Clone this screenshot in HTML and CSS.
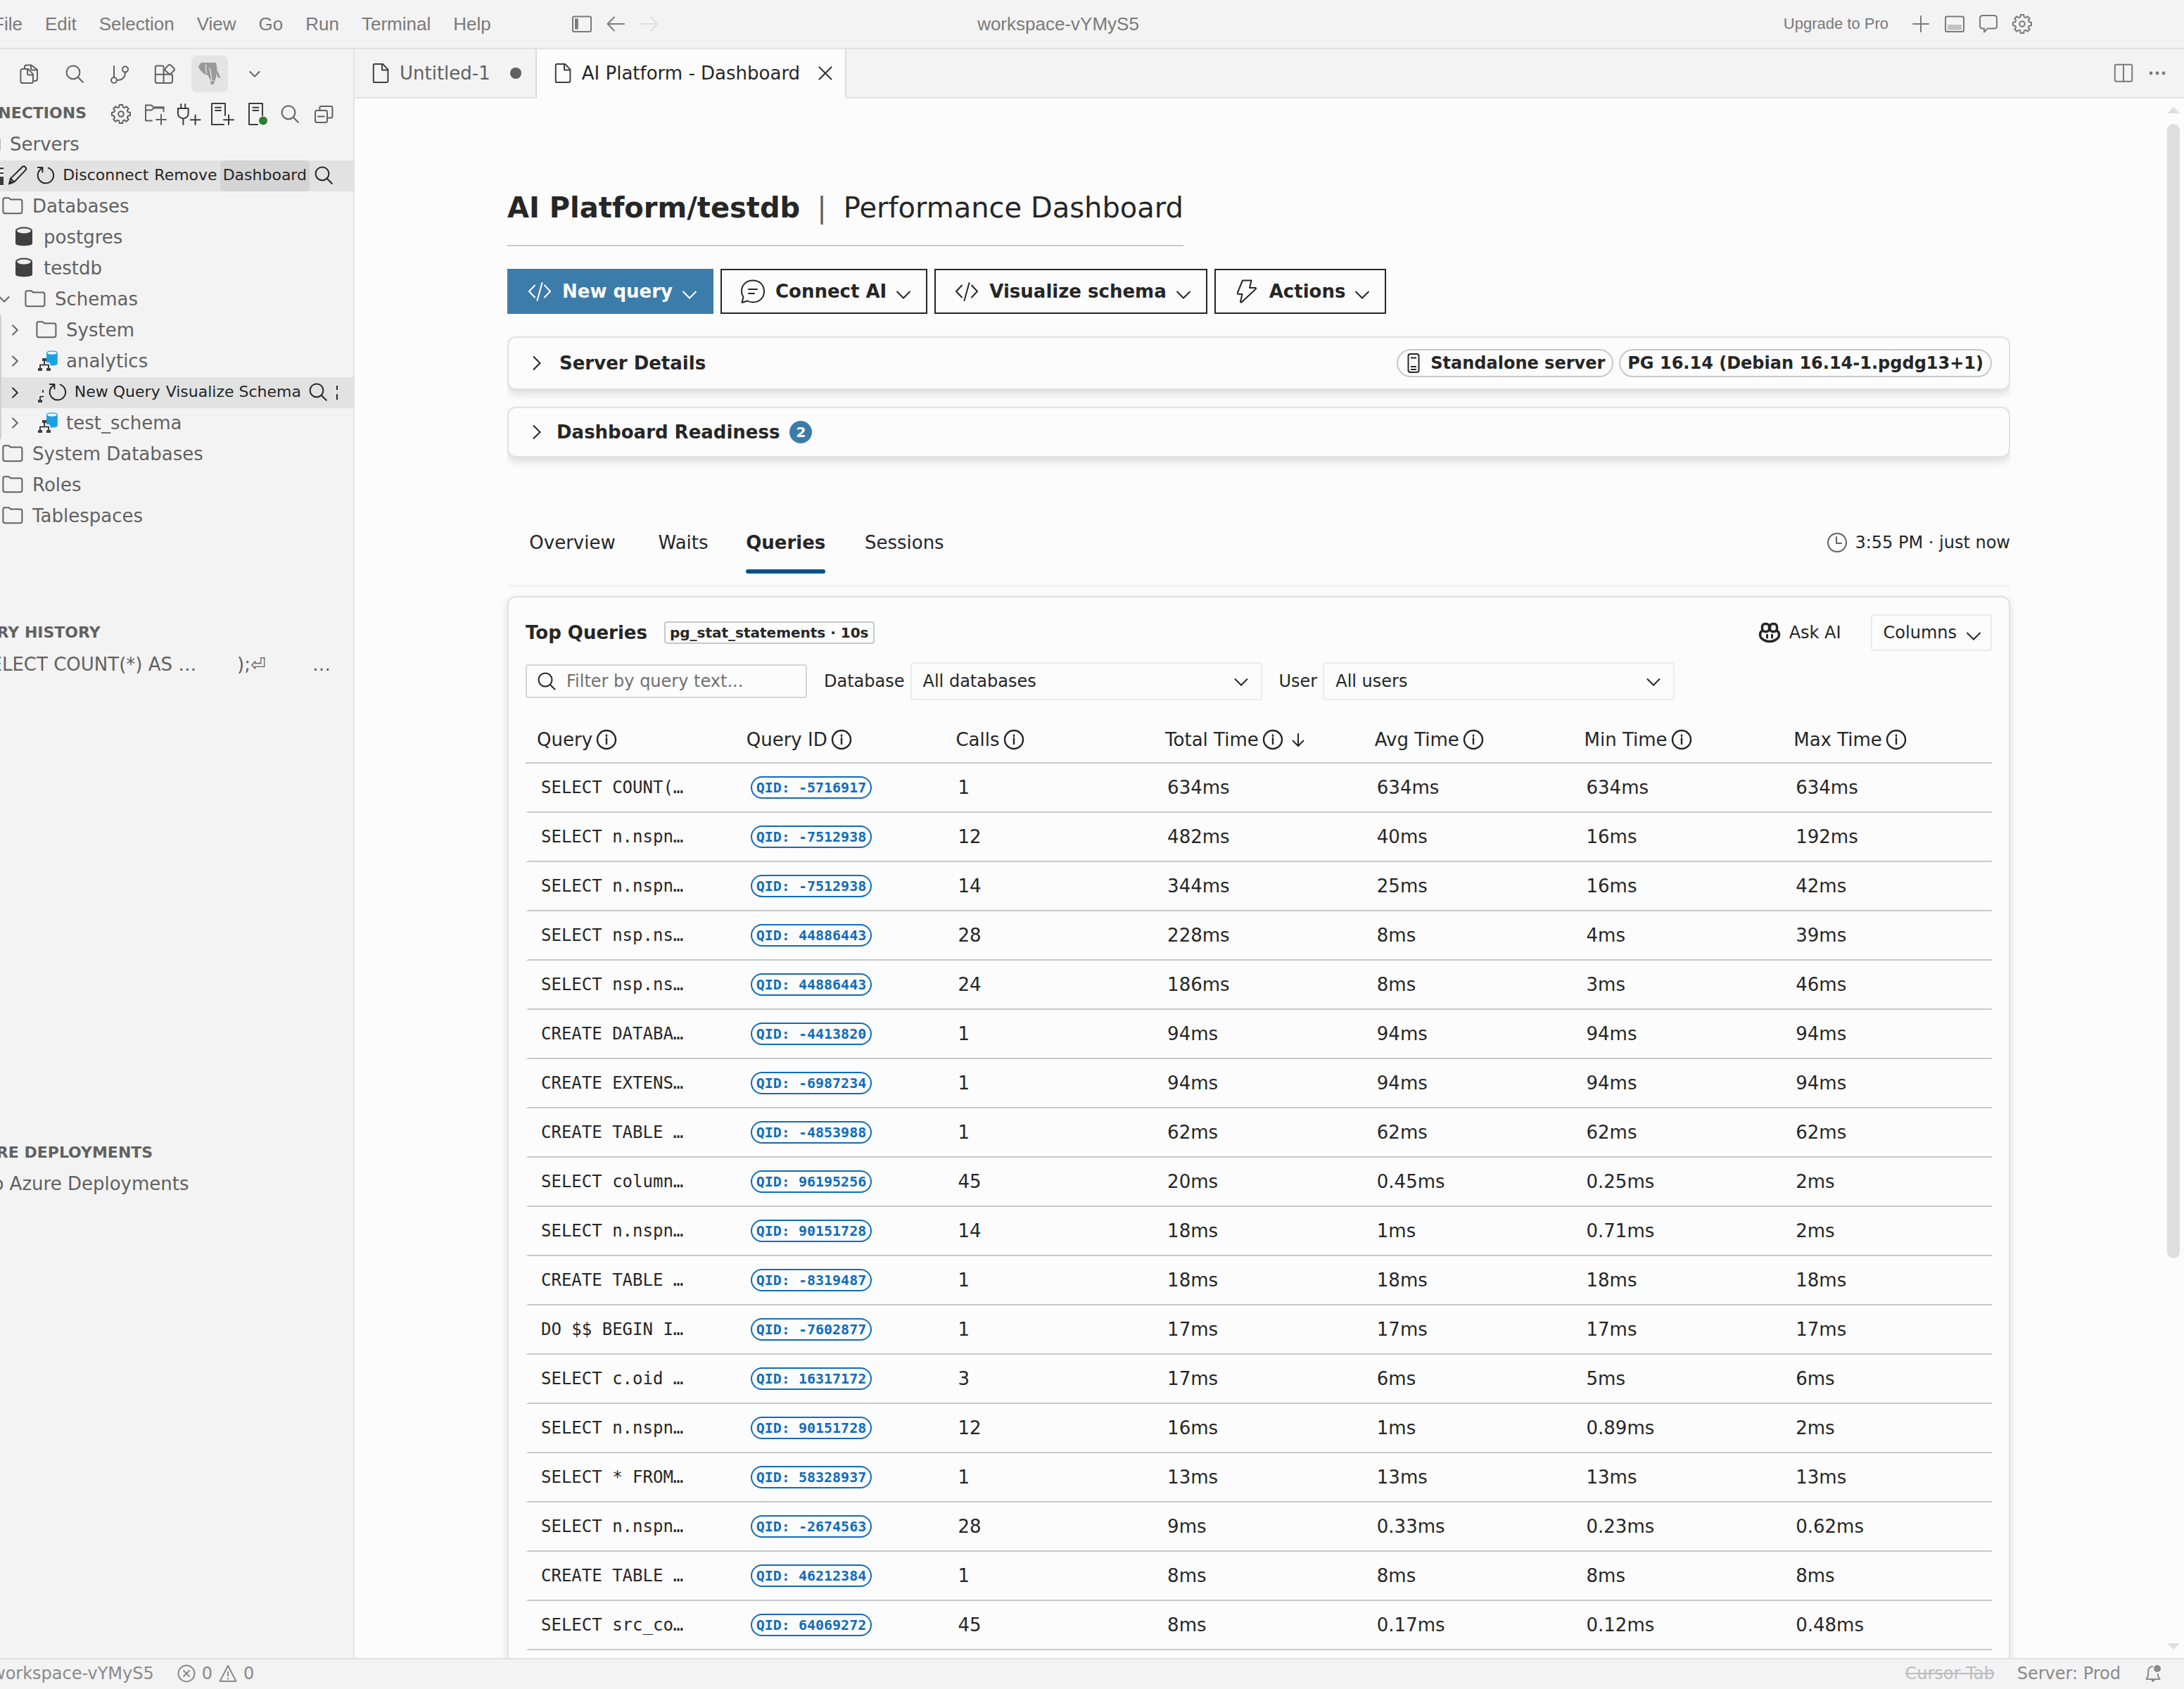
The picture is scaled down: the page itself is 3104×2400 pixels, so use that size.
FILE: index.html
```html
<!DOCTYPE html>
<html lang="en">
<head>
  <meta charset="UTF-8" />
  <meta name="viewport" content="width=device-width, initial-scale=1.0" />
  <title>AI Platform - Dashboard</title>
  <link rel="stylesheet" href="styles.css">
</head>
<body>
  <svg class="sprite" aria-hidden="true">
    <symbol id="i-folder" viewBox="0 0 16 16"><path d="M1.2 3.4c0-.8.5-1.3 1.300-1.300h2.700l1.500 1.200h6.700c.8 0 1.300.5 1.300 1.300v7.200c0 .8-.5 1.300-1.300 1.300H2.500c-.8 0-1.300-.5-1.300-1.300z"/></symbol>
    <symbol id="i-right" viewBox="0 0 16 16"><path d="M6 4.700 9.400 8 6 11.300"/></symbol>
    <symbol id="i-down" viewBox="0 0 16 16"><path d="M4.700 6.500 8 9.800l3.300-3.300"/></symbol>
    <symbol id="i-search" viewBox="0 0 16 16"><circle cx="7" cy="6.900" r="4.700"/><path d="m10.400 10.400 3.500 3.500"/></symbol>
    <symbol id="i-refresh" viewBox="0 0 16 16"><path d="M5 3.300A5.600 5.600 0 1 0 9.900 2.800M2.400 2.500h3.300v3.300"/></symbol>
    <symbol id="i-gear" viewBox="0 0 16 16"><path d="M6.850 1.500H9.150Q9.200 3 9.500 3.150T10.550 3.580L11.780 2.590 13.410 4.220 12.420 5.450Q12.600 6.400 12.930 6.680L14.500 6.850V9.150L12.930 9.320Q12.600 9.600 12.420 10.550L13.410 11.780 11.780 13.410 10.550 12.420Q9.600 12.600 9.320 12.930L9.150 14.500H6.850L6.680 12.930Q6.400 12.600 5.450 12.420L4.220 13.410 2.590 11.780 3.580 10.550Q3.400 9.600 3.070 9.320L1.500 9.150V6.850L3.070 6.680Q3.400 6.400 3.580 5.450L2.590 4.220 4.220 2.590 5.450 3.580Q6.400 3.400 6.680 3.070Z"/><circle cx="8" cy="8" r="1.900"/></symbol>
    <symbol id="i-file" viewBox="0 0 16 16"><path d="M4.200 1.500h5.800L13.700 5.300v8.200q0 1-1 1H4.200q-.8 0-.8-.8V2.300q0-.8.8-.8zM9.500 1.700v4.100h4"/></symbol>
    <symbol id="i-db" viewBox="0 0 16 16"><path class="fill" d="M2 3.500v9c0 2.200 12 2.200 12 0v-9z"/><ellipse class="lid" cx="8" cy="3.500" rx="5.500" ry="2.200"/></symbol>
    <symbol id="i-schema" viewBox="0 0 16 16"><path fill="#1ba1e2" stroke="none" d="M8 2.300v8.400l3 .6c2.500 0 4.900-.3 4.900-1.400V2.300z"/><ellipse cx="12" cy="2.300" rx="3.700" ry="1.400" fill="#eaf4fa" stroke="#1ba1e2" stroke-width=".6"/><path stroke="#f5f5f5" stroke-width="2.500" d="M6.500 7v3M3.500 13V10.200h6V13"/><path fill="none" stroke="#404040" stroke-width="1" d="M6.500 8v2.700M3.500 13v-2.300h6V13"/><path fill="#404040" stroke="none" d="M5 6h3v2H5zM2 13h3v2H2zM8 13h3v2H8z"/></symbol>
    <symbol id="i-info" viewBox="0 0 32 32"><g stroke-width="2.400"><circle cx="16" cy="16" r="13"/><path d="M16 14v8M16 9.500v1.500"/></g></symbol>
    <symbol id="i-code" viewBox="0 0 40 40"><path d="M13 11.500 5 20l8 8.500M27 11.500l8 8.500-8 8.500M23.500 8l-7 25"/></symbol>
    <symbol id="i-menu-chevron" viewBox="0 0 24 24"><path d="m2.500 12 9.500 9.500L21.500 12"/></symbol>
    <symbol id="i-select-chevron" viewBox="0 0 24 24"><path d="m3 8.500 9 9 9-9"/></symbol>
    <symbol id="i-card-chevron" viewBox="0 0 24 24"><path d="m7 2.500 9.500 9.500L7 21.500"/></symbol>
  </svg>

  <header class="titlebar">
    <div class="titlebar-left">
      <nav class="menu">
        <a href="#">File</a><a href="#">Edit</a><a href="#">Selection</a><a href="#">View</a><a href="#">Go</a><a href="#">Run</a><a href="#">Terminal</a><a href="#">Help</a>
      </nav>
      <button class="icon-btn" aria-label="Toggle side bar"><svg class="icon" viewBox="0 0 16 16"><rect x="1.500" y="2.700" width="13" height="10.800" rx="1"/><path class="fill" d="M3 4.200h2.400v7.600H3z"/></svg></button>
      <button class="icon-btn" aria-label="Back"><svg class="icon" viewBox="0 0 16 16"><path d="M14 8H2.500M7 3.200 2.300 8 7 12.800"/></svg></button>
      <button class="icon-btn faded" aria-label="Forward"><svg class="icon" viewBox="0 0 16 16"><path d="M2 8h11.500M9 3.200 13.700 8 9 12.800"/></svg></button>
    </div>
    <div class="titlebar-title">workspace-vYMyS5</div>
    <div class="titlebar-right">
      <a href="#" class="upgrade">Upgrade to Pro</a>
      <button class="icon-btn" aria-label="New"><svg class="icon" viewBox="0 0 16 16"><path d="M8 2.500v11M2.500 8h11"/></svg></button>
      <button class="icon-btn" aria-label="Toggle panel"><svg class="icon" viewBox="0 0 16 16"><rect x="1.500" y="2.700" width="13" height="10.800" rx="1"/><path fill="#c2c2c2" stroke="none" d="M3 8.500h10v3.800H3z"/></svg></button>
      <button class="icon-btn" aria-label="Chat"><svg class="icon" viewBox="0 0 16 16"><path d="M4 2h8q2 0 2 2v5.300q0 2-2 2H7.500L5 13.800v-2.500H4q-2 0-2-2V4q0-2 2-2z"/></svg></button>
      <button class="icon-btn" aria-label="Settings"><svg class="icon"><use href="#i-gear"/></svg></button>
    </div>
  </header>

  <div class="workbench">
    <aside class="sidebar">
      <div class="view-switcher">
        <button aria-label="Explorer"><svg class="icon" viewBox="0 0 16 16"><path d="M4.500 4V3q0-1.300 1.300-1.300H9L13.500 5v6.500q0 1.500-1.500 1.500h-1M9 1.800v2.400q0 1 1 1h3.300M3 4.500h4l3.500 3.700v5q0 1.300-1.300 1.300H3q-1.300 0-1.300-1.300V5.800Q1.700 4.500 3 4.500zM6.500 4.700v3q0 1 1 1h3"/></svg></button>
        <button aria-label="Search"><svg class="icon"><use href="#i-search"/></svg></button>
        <button aria-label="Source control"><svg class="icon" viewBox="0 0 16 16"><circle cx="4" cy="12.500" r="2"/><circle cx="12" cy="4.800" r="2"/><path d="M4 2.500v8M12 6.800c0 3.500-2 5.700-6 5.700"/></svg></button>
        <button aria-label="Extensions"><svg class="icon" viewBox="0 0 16 16"><path d="M7.300 8.400V3.200q0-1-1-1H2.600q-1.200 0-1.200 1.200v9.800q0 1.300 1.300 1.300h9.600q1.200 0 1.200-1.200V9.500q0-1.100-1.100-1.100H1.400M7.300 8.400v6.100M8.500 4.200l2.200-2.400q.8-.6 1.600 0l2.400 2.300q.6.700 0 1.400l-2.300 2.400q-.7.500-1.400 0L8.500 5.600q-.5-.7 0-1.400z"/></svg></button>
        <button class="active" aria-label="PostgreSQL"><svg class="icon" viewBox="0 0 32 32"><path fill="#999" stroke="none" d="M0 5 4 0h21l1.500 8 5 14-4-1-2-6-.5 6-3.500 10h-4V26l-4-8-5-2Q2 12 0 5z"/><path stroke="#eee" stroke-width="1.200" fill="none" d="M11 3q-1.500 5 1 12M15 8q3 1 2.500 8l1.500 7M17 24l4 2M26 10l5 7"/></svg></button>
        <button aria-label="More views"><svg class="icon"><use href="#i-down"/></svg></button>
      </div>

      <section class="pane">
        <div class="pane-header">
          <h2>CONNECTIONS</h2>
          <button class="icon-btn" aria-label="Settings"><svg class="icon"><use href="#i-gear"/></svg></button>
          <button class="icon-btn" aria-label="New folder"><svg class="icon" viewBox="0 0 16 16"><path d="M6 12.800H1.500V1.700h4l1.700 1.400h7.100v3M1.500 5.200h4.200l1.500-1.400h7.100M12.500 8.500v7M9 12h7"/></svg></button>
          <button class="icon-btn dark" aria-label="New connection"><svg class="icon" viewBox="0 0 16 16"><path d="M2.600 1v3M5.600 1v3M.5 4h7.300v4q-.2 2.700-3.600 3.200Q.8 10.700.5 8zM4.200 11.200V15.500M12.800 8.800v6.700M9.300 12.100h7"/></svg></button>
          <button class="icon-btn dark" aria-label="Add server"><svg class="icon" viewBox="0 0 16 16"><path d="M10 9V.500H.5v15H9M3 3.400h4M3 5.500h4M12.500 8.800v6.700M9 12.100h7"/></svg></button>
          <button class="icon-btn dark" aria-label="Add container"><svg class="icon" viewBox="0 0 16 16"><path d="M12.500 9V.500H3v15h6M5.700 3.400h4M5.700 5.500h4"/><circle cx="13" cy="12.700" r="3" fill="#2e7d32" stroke="none"/></svg></button>
          <button class="icon-btn" aria-label="Search"><svg class="icon"><use href="#i-search"/></svg></button>
          <button class="icon-btn" aria-label="Collapse all"><svg class="icon" viewBox="0 0 16 16"><rect x="2" y="5.500" width="8.500" height="8.500" rx="1.200"/><path d="M5.200 5.300V3.500q0-1 1-1h7q1 0 1 1V9.500q0 1.200-1 1.200h-2.500M4 9.800h4.500"/></svg></button>
        </div>
        <div class="tree">
          <div class="row lv0"><svg class="icon"><use href="#i-down"/></svg><svg class="icon"><use href="#i-folder"/></svg><span>Servers</span></div>
          <div class="row lv1 hovered">
            <svg class="icon"><use href="#i-down"/></svg>
            <span class="row-icon"><svg class="icon server-icon" viewBox="0 0 16 16"><path d="M1 1.500h14v2.200H1zM1 5h14v2H1zM1 8h14v7H1z"/></svg></span>
            <button class="action" aria-label="Edit"><svg class="icon" viewBox="0 0 16 16"><path d="M2 14.200 3 10.300 11.600 1.900q.9-.6 1.900.3t.3 2L5.600 12.800zM3.200 10.500l2.300 2.200M2 14.200l1.700-1.700"/></svg></button>
            <button class="action" aria-label="Refresh"><svg class="icon"><use href="#i-refresh"/></svg></button>
            <button class="action-label">Disconnect</button><button class="action-label">Remove</button><button class="action-label pressed">Dashboard</button>
            <button class="action" aria-label="Search"><svg class="icon"><use href="#i-search"/></svg></button>
          </div>
          <div class="row lv2"><svg class="icon"><use href="#i-down"/></svg><svg class="icon"><use href="#i-folder"/></svg><span>Databases</span></div>
          <div class="row lv3"><svg class="icon"></svg><svg class="icon db"><use href="#i-db"/></svg><span>postgres</span></div>
          <div class="row lv3"><svg class="icon"></svg><svg class="icon db"><use href="#i-db"/></svg><span>testdb</span></div>
          <div class="row lv4"><svg class="icon"><use href="#i-down"/></svg><svg class="icon"><use href="#i-folder"/></svg><span>Schemas</span></div>
          <div class="tree-group">
            <div class="row"><svg class="icon"><use href="#i-right"/></svg><svg class="icon"><use href="#i-folder"/></svg><span>System</span></div>
            <div class="row"><svg class="icon"><use href="#i-right"/></svg><svg class="icon"><use href="#i-schema"/></svg><span>analytics</span></div>
            <div class="row hovered">
              <svg class="icon"><use href="#i-right"/></svg>
              <span class="row-icon"><svg class="icon"><use href="#i-schema"/></svg></span>
              <button class="action" aria-label="Refresh"><svg class="icon"><use href="#i-refresh"/></svg></button>
              <button class="action-label">New Query</button><button class="action-label">Visualize Schema</button>
              <button class="action" aria-label="Search"><svg class="icon"><use href="#i-search"/></svg></button>
              <svg class="more-cut" viewBox="0 0 8 20"><path d="M7 0v6M7 12v8"/></svg>
            </div>
            <div class="row"><svg class="icon"><use href="#i-right"/></svg><svg class="icon"><use href="#i-schema"/></svg><span>test_schema</span></div>
          </div>
          <div class="row lv2"><svg class="icon"><use href="#i-right"/></svg><svg class="icon"><use href="#i-folder"/></svg><span>System Databases</span></div>
          <div class="row lv2"><svg class="icon"><use href="#i-right"/></svg><svg class="icon"><use href="#i-folder"/></svg><span>Roles</span></div>
          <div class="row lv2"><svg class="icon"><use href="#i-right"/></svg><svg class="icon"><use href="#i-folder"/></svg><span>Tablespaces</span></div>
        </div>
      </section>

      <section class="pane">
        <div class="pane-header"><h2>QUERY HISTORY</h2></div>
        <div class="row text-row">SELECT COUNT(*) AS …       );⏎        …</div>
      </section>

      <section class="pane">
        <div class="pane-header"><h2>AZURE DEPLOYMENTS</h2></div>
        <div class="row text-row">No Azure Deployments</div>
      </section>
    </aside>

    <div class="editor">
      <div class="tabs">
        <div class="tab"><svg class="icon"><use href="#i-file"/></svg><span>Untitled-1</span><svg class="icon tab-end" viewBox="0 0 16 16"><circle class="fill" cx="8" cy="8" r="4"/></svg></div>
        <div class="tab active"><svg class="icon"><use href="#i-file"/></svg><span>AI Platform - Dashboard</span><button class="icon-btn tab-end" aria-label="Close"><svg class="icon" viewBox="0 0 16 16"><path d="m3.700 3.700 8.600 8.600M12.300 3.700l-8.600 8.600"/></svg></button></div>
        <div class="tab-actions">
          <button class="icon-btn" aria-label="Split editor"><svg class="icon" viewBox="0 0 16 16"><rect x="1.900" y="1.900" width="12.200" height="12" rx="1"/><path d="M8 2v12"/></svg></button>
          <button class="icon-btn" aria-label="More actions"><svg class="icon" viewBox="0 0 16 16"><g class="fill"><circle cx="3.500" cy="8" r="1.200"/><circle cx="8" cy="8" r="1.200"/><circle cx="12.500" cy="8" r="1.200"/></g></svg></button>
        </div>
      </div>

      <div class="viewport">
        <main class="dashboard">
          <h1 class="page-title"><strong>AI Platform/testdb</strong><span class="pipe">|</span><span>Performance Dashboard</span></h1>

          <div class="toolbar">
            <button class="btn primary"><svg class="icon-lg"><use href="#i-code"/></svg>New query<svg class="chev"><use href="#i-menu-chevron"/></svg></button>
            <button class="btn"><svg class="icon-lg" viewBox="0 0 40 40"><path d="M20 4.500c9.500 0 16 6.500 16 15.500s-6.500 15.500-16 15.500c-3 0-5.500-.8-7.500-2L4.500 36l2-8C4.800 25.500 4 23 4 20 4 11 10.500 4.500 20 4.500zM14 17h12M14 23h8"/></svg>Connect AI<svg class="chev"><use href="#i-menu-chevron"/></svg></button>
            <button class="btn"><svg class="icon-lg"><use href="#i-code"/></svg>Visualize schema<svg class="chev"><use href="#i-menu-chevron"/></svg></button>
            <button class="btn"><svg class="icon-lg" viewBox="0 0 40 40"><path d="M14 4.500h12.500L24 15h8.500q1 1 0 2L12.500 35.500q-1.500.5-1.500-1L13.500 24H8q-1.500-.5-1-2.500z"/></svg>Actions<svg class="chev"><use href="#i-menu-chevron"/></svg></button>
          </div>

          <div class="summary-cards">
            <details class="card">
              <summary class="roomy">
                <svg class="chev"><use href="#i-card-chevron"/></svg>
                <span class="card-name">Server Details</span>
                <span class="badges">
                  <span class="badge"><svg class="badge-icon" viewBox="0 0 24 32"><rect x="4.500" y="3" width="15" height="26" rx="3"/><path d="M8 8.500h8M8 21h8M8 25h8"/></svg>Standalone server</span>
                  <span class="badge">PG 16.14 (Debian 16.14-1.pgdg13+1)</span>
                </span>
              </summary>
            </details>
            <details class="card">
              <summary>
                <svg class="chev"><use href="#i-card-chevron"/></svg>
                <span class="card-name">Dashboard Readiness</span>
                <span class="count">2</span>
              </summary>
            </details>
          </div>

          <div class="tabbar">
            <div class="tablist" role="tablist">
              <button role="tab" data-label="Overview">Overview</button>
              <button role="tab" data-label="Waits">Waits</button>
              <button role="tab" data-label="Queries" aria-selected="true">Queries</button>
              <button role="tab" data-label="Sessions">Sessions</button>
            </div>
            <div class="updated"><svg class="icon" viewBox="0 0 32 32"><circle cx="16" cy="16" r="13"/><path d="M15 8v9h7"/></svg>3:55 PM · just now</div>
          </div>

          <section class="panel">
            <div class="panel-head">
              <h3>Top Queries</h3>
              <span class="source">pg_stat_statements · 10s</span>
              <button class="ask-ai"><svg class="icon" viewBox="0 0 32 32"><g stroke-width="3.500"><rect x="5.500" y="3.500" width="10" height="11" rx="4"/><rect x="16.500" y="3.500" width="10" height="11" rx="4"/><path d="M5 13.500q-2.500 2-2.500 5t1.500 5q5 5 12 5t12-5q1.500-2 1.500-5t-2.500-5"/></g><path stroke-width="3" d="M12.500 19v4M19.500 19v4"/></svg>Ask AI</button>
              <button class="columns-btn">Columns<svg class="chev"><use href="#i-menu-chevron"/></svg></button>
            </div>

            <div class="filters">
              <div class="search-box">
                <svg viewBox="0 0 28 28"><circle cx="12" cy="12" r="9.500"/><path d="m19 19 7 7"/></svg>
                <input type="text" id="query-filter" aria-label="Filter by query text" placeholder="Filter by query text...">
              </div>
              <div class="field">
                <label for="database">Database</label>
                <div class="select"><select id="database"><option>All databases</option></select><svg class="chev"><use href="#i-select-chevron"/></svg></div>
              </div>
              <div class="field">
                <label for="user">User</label>
                <div class="select"><select id="user"><option>All users</option></select><svg class="chev"><use href="#i-select-chevron"/></svg></div>
              </div>
            </div>

            <table class="queries">
              <thead>
                <tr>
                  <th><span>Query<svg class="icon"><use href="#i-info"/></svg></span></th>
                  <th><span>Query ID<svg class="icon"><use href="#i-info"/></svg></span></th>
                  <th><span>Calls<svg class="icon"><use href="#i-info"/></svg></span></th>
                  <th><span>Total Time<svg class="icon"><use href="#i-info"/></svg><svg class="sort" viewBox="0 0 24 32"><path d="M12 7v18M4 17l8 8 8-8"/></svg></span></th>
                  <th><span>Avg Time<svg class="icon"><use href="#i-info"/></svg></span></th>
                  <th><span>Min Time<svg class="icon"><use href="#i-info"/></svg></span></th>
                  <th><span>Max Time<svg class="icon"><use href="#i-info"/></svg></span></th>
                </tr>
              </thead>
              <tbody>
                <tr><td>SELECT COUNT(…</td><td><span class="qid">QID: -5716917</span></td><td>1</td><td>634ms</td><td>634ms</td><td>634ms</td><td>634ms</td></tr>
                <tr><td>SELECT n.nspn…</td><td><span class="qid">QID: -7512938</span></td><td>12</td><td>482ms</td><td>40ms</td><td>16ms</td><td>192ms</td></tr>
                <tr><td>SELECT n.nspn…</td><td><span class="qid">QID: -7512938</span></td><td>14</td><td>344ms</td><td>25ms</td><td>16ms</td><td>42ms</td></tr>
                <tr><td>SELECT nsp.ns…</td><td><span class="qid">QID: 44886443</span></td><td>28</td><td>228ms</td><td>8ms</td><td>4ms</td><td>39ms</td></tr>
                <tr><td>SELECT nsp.ns…</td><td><span class="qid">QID: 44886443</span></td><td>24</td><td>186ms</td><td>8ms</td><td>3ms</td><td>46ms</td></tr>
                <tr><td>CREATE DATABA…</td><td><span class="qid">QID: -4413820</span></td><td>1</td><td>94ms</td><td>94ms</td><td>94ms</td><td>94ms</td></tr>
                <tr><td>CREATE EXTENS…</td><td><span class="qid">QID: -6987234</span></td><td>1</td><td>94ms</td><td>94ms</td><td>94ms</td><td>94ms</td></tr>
                <tr><td>CREATE TABLE …</td><td><span class="qid">QID: -4853988</span></td><td>1</td><td>62ms</td><td>62ms</td><td>62ms</td><td>62ms</td></tr>
                <tr><td>SELECT column…</td><td><span class="qid">QID: 96195256</span></td><td>45</td><td>20ms</td><td>0.45ms</td><td>0.25ms</td><td>2ms</td></tr>
                <tr><td>SELECT n.nspn…</td><td><span class="qid">QID: 90151728</span></td><td>14</td><td>18ms</td><td>1ms</td><td>0.71ms</td><td>2ms</td></tr>
                <tr><td>CREATE TABLE …</td><td><span class="qid">QID: -8319487</span></td><td>1</td><td>18ms</td><td>18ms</td><td>18ms</td><td>18ms</td></tr>
                <tr><td>DO $$ BEGIN I…</td><td><span class="qid">QID: -7602877</span></td><td>1</td><td>17ms</td><td>17ms</td><td>17ms</td><td>17ms</td></tr>
                <tr><td>SELECT c.oid …</td><td><span class="qid">QID: 16317172</span></td><td>3</td><td>17ms</td><td>6ms</td><td>5ms</td><td>6ms</td></tr>
                <tr><td>SELECT n.nspn…</td><td><span class="qid">QID: 90151728</span></td><td>12</td><td>16ms</td><td>1ms</td><td>0.89ms</td><td>2ms</td></tr>
                <tr><td>SELECT * FROM…</td><td><span class="qid">QID: 58328937</span></td><td>1</td><td>13ms</td><td>13ms</td><td>13ms</td><td>13ms</td></tr>
                <tr><td>SELECT n.nspn…</td><td><span class="qid">QID: -2674563</span></td><td>28</td><td>9ms</td><td>0.33ms</td><td>0.23ms</td><td>0.62ms</td></tr>
                <tr><td>CREATE TABLE …</td><td><span class="qid">QID: 46212384</span></td><td>1</td><td>8ms</td><td>8ms</td><td>8ms</td><td>8ms</td></tr>
                <tr><td>SELECT src_co…</td><td><span class="qid">QID: 64069272</span></td><td>45</td><td>8ms</td><td>0.17ms</td><td>0.12ms</td><td>0.48ms</td></tr>
              </tbody>
            </table>
          </section>
        </main>

        <div class="scrollbar" aria-hidden="true">
          <svg viewBox="0 0 18 9"><path d="M9 0l9 9H0z"/></svg>
          <div class="track"><div class="thumb"></div></div>
          <svg viewBox="0 0 18 9"><path d="M9 9l9-9H0z"/></svg>
        </div>
      </div>
    </div>
  </div>

  <footer class="statusbar">
    <a href="#" class="workspace">workspace-vYMyS5</a>
    <a href="#" class="problems">
      <svg viewBox="0 0 28 28"><circle cx="14" cy="14" r="11.500"/><path d="m9.500 9.500 9 9M18.500 9.500l-9 9"/></svg>0
      <svg viewBox="0 0 28 28"><path d="M14 3 2.500 25h23zM14 11v7M14 20v2.500"/></svg>0
    </a>
    <a href="#" class="cursor-tab">Cursor Tab</a>
    <a href="#">Server: Prod</a>
    <button class="icon-btn" aria-label="Notifications"><svg viewBox="0 0 28 28"><path d="M14 4q-7 0-7 8v5.500L4.500 22h19L21 17.500V14"/><path class="fill" d="M11 23h6l-3 3.500z"/><circle class="fill" cx="20" cy="7" r="5"/></svg></button>
  </footer>
</body>
</html>
```

FILE: styles.css
```css
* {
  box-sizing: border-box;
}
body {
  margin: 0;
  height: 100vh;
  display: flex;
  flex-direction: column;
  overflow: hidden;
  font-family: "DejaVu Sans", sans-serif;
  font-size: 26px;
  color: #262626;
  background: #f3f3f3;
}
h1, h2, h3 {
  margin: 0;
}
a {
  color: inherit;
  text-decoration: none;
}
button {
  font: inherit;
  color: inherit;
  background: none;
  border: none;
  padding: 0;
}
svg {
  fill: none;
  stroke: currentColor;
  flex: none;
}
.sprite {
  position: absolute;
  width: 0;
  height: 0;
}
.icon {
  display: block;
  width: 32px;
  height: 32px;
  stroke-width: 1;
  stroke-linecap: round;
  stroke-linejoin: round;
  overflow: visible;
}
.icon-btn {
  display: flex;
}
.fill {
  fill: currentColor;
  stroke: none;
}

/* title bar */
.titlebar {
  display: grid;
  grid-template-columns: 1fr auto 1fr;
  align-items: center;
  height: 70px;
  padding-right: 96px;
  border-bottom: 2px solid #e2e2e2;
  font-family: "Liberation Sans", sans-serif;
  color: #7a7a7a;
}
.titlebar-left, .titlebar-right {
  display: flex;
  align-items: center;
  gap: 16px;
}
.titlebar-right {
  justify-content: flex-end;
  padding-right: 118px;
}
.menu {
  display: flex;
  margin-left: -26px;
  margin-right: 81px;
}
.menu a {
  padding: 0 16px;
}
.faded {
  color: #e0e0e0;
}
.upgrade {
  font-size: 22px;
  padding-right: 14px;
}

.workbench {
  flex: 1;
  min-height: 0;
  display: flex;
}

/* sidebar, partly scrolled out on the left */
.sidebar {
  flex: none;
  width: 600px;
  margin-left: -96px;
  border-right: 2px solid #e2e2e2;
  display: flex;
  flex-direction: column;
  color: #616161;
}
.view-switcher {
  display: flex;
  align-items: center;
  gap: 12px;
  height: 70px;
  padding-left: 112px;
}
.view-switcher button {
  width: 52px;
  height: 52px;
  display: grid;
  place-items: center;
  border-radius: 8px;
}
.view-switcher .active {
  background: #e4e4e4;
}
.pane {
  flex: 1;
}
.pane-header {
  display: flex;
  align-items: center;
  gap: 16px;
  height: 44px;
  padding: 0 26px 0 40px;
}
.pane-header h2 {
  margin-right: auto;
  padding-bottom: 4px;
  font-size: 22px;
}
.dark {
  color: #3c3c3c;
}
.row {
  display: flex;
  align-items: center;
  gap: 12px;
  height: 44px;
  padding-right: 22px;
  padding-bottom: 2px;
  white-space: nowrap;
}
.lv0 { padding-left: 22px; }
.lv1 { padding-left: 38px; }
.lv2 { padding-left: 54px; }
.lv3 { padding-left: 70px; }
.lv4 { padding-left: 86px; }
.tree-group {
  margin-left: 96px;
  border-left: 2px solid #d0d0d0;
}
.tree-group .row {
  padding-left: 4px;
}
.text-row {
  padding-left: 66px;
  white-space: pre;
}
.db {
  color: #404040;
}
.lid {
  fill: #ededed;
  stroke: #404040;
  stroke-width: 1;
}
.row.hovered {
  gap: 0;
  padding-bottom: 0;
  background: #e2e2e2;
  color: #262626;
}
.row-icon {
  flex: 1;
  min-width: 0;
  margin-left: 12px;
  overflow: hidden;
}
.server-icon {
  fill: #3c3c3c;
  stroke: #f5f5f5;
}
.action {
  flex: none;
  width: 40px;
  padding: 0 4px 2px;
}
.action-label {
  height: 44px;
  padding: 0 4px 4px;
  font-size: 22px;
  border-radius: 6px;
}
.pressed {
  background: #d4d4d4;
}
.more-cut {
  width: 8px;
  height: 20px;
  stroke-width: 2;
}

/* editor tabs */
.editor {
  flex: 1;
  min-width: 0;
  display: flex;
  flex-direction: column;
  background: #fcfcfc;
}
.tabs {
  display: flex;
  height: 70px;
  background: #f3f3f3;
}
.tab {
  display: flex;
  align-items: center;
  gap: 12px;
  padding: 0 12px 0 20px;
  border-right: 2px solid #dcdcdc;
  border-bottom: 2px solid #e2e2e2;
  color: #616161;
}
.tab > .icon:first-child {
  color: #404040;
}
.tab.active {
  background: #fcfcfc;
  border-bottom-color: #fcfcfc;
  color: #262626;
}
.tab-end {
  margin-left: 8px;
}
.tab-actions {
  flex: 1;
  display: flex;
  align-items: center;
  justify-content: flex-end;
  gap: 16px;
  padding-right: 22px;
  border-bottom: 2px solid #e2e2e2;
  color: #7a7a7a;
}

/* dashboard */
.viewport {
  flex: 1;
  min-height: 0;
  display: flex;
  overflow: hidden;
}
.dashboard {
  flex: 1;
  max-width: 2136px;
  margin: 0 auto;
  padding-top: 130px;
}
.page-title {
  display: flex;
  gap: 24px;
  width: fit-content;
  padding-bottom: 28px;
  border-bottom: 2px solid #c8c8c8;
  font-size: 40px;
  font-weight: 400;
  line-height: 50px;
}
.pipe {
  color: #616161;
}
.toolbar {
  display: flex;
  gap: 10px;
  margin: 32px 0;
}
.btn {
  display: flex;
  align-items: center;
  gap: 12px;
  height: 64px;
  padding: 0 20px 0 24px;
  border: 2px solid #262626;
  font-weight: 700;
}
.primary {
  color: #fff;
  background: #3c7cab;
  border-color: #3c7cab;
}
.icon-lg {
  width: 40px;
  height: 40px;
  stroke-width: 2;
  stroke-linecap: round;
  stroke-linejoin: round;
}
.chev {
  width: 24px;
  height: 24px;
  stroke-width: 2;
}
.summary-cards {
  display: flex;
  flex-direction: column;
  gap: 24px;
  overflow-x: clip;
}
.card {
  border: 2px solid #e2e2e2;
  border-radius: 12px;
  background: #fcfcfc;
  box-shadow: 0 6px 12px rgba(0, 0, 0, 0.13);
}
.card summary {
  display: flex;
  align-items: center;
  gap: 16px;
  height: 68px;
  padding: 0 24px 0 28px;
  list-style: none;
  font-weight: 700;
}
.card .roomy {
  height: 72px;
  gap: 20px;
}
.card .count {
  margin-left: -2px;
}
.badges {
  display: flex;
  gap: 8px;
  margin-left: auto;
}
.badge {
  display: flex;
  align-items: center;
  gap: 12px;
  height: 40px;
  padding: 0 10px;
  border: 2px solid #c8c8c8;
  border-radius: 20px;
  font-size: 24px;
}
.badge-icon {
  width: 24px;
  height: 32px;
  stroke-width: 2;
}
.count {
  display: grid;
  place-items: center;
  width: 32px;
  height: 32px;
  border-radius: 50%;
  background: #3c7cab;
  color: #fff;
  font-size: 20px;
}
.tabbar {
  display: flex;
  align-items: center;
  justify-content: space-between;
  margin: 64px 0 16px;
  padding: 13px 0 16px;
  box-shadow: 0 2px 6px rgba(0, 0, 0, 0.07);
  clip-path: inset(0 0 -16px 0);
}
.tablist {
  display: flex;
}
/* the hidden bold copy keeps a tab's width when it gets selected */
.tablist button {
  position: relative;
  display: grid;
  align-content: center;
  justify-items: center;
  height: 88px;
  margin: 0 24px;
}
.tablist button::after {
  content: attr(data-label);
  height: 0;
  visibility: hidden;
  font-weight: 700;
}
.tablist button[aria-selected="true"] {
  font-weight: 700;
}
.tablist button[aria-selected="true"]::before {
  content: "";
  position: absolute;
  left: 0;
  right: 0;
  bottom: 0;
  height: 6px;
  border-radius: 3px;
  background: #005388;
}
.updated {
  display: flex;
  align-items: center;
  gap: 9px;
  font-size: 24px;
}
.updated .icon {
  color: #616161;
  stroke-width: 2;
}

/* top queries */
.panel {
  padding: 24px;
  border: 2px solid #e2e2e2;
  border-radius: 12px;
  background: #fcfcfc;
  box-shadow: 0 4px 12px rgba(0, 0, 0, 0.13);
}
.panel-head {
  display: flex;
  align-items: center;
}
.panel-head h3 {
  font-size: 26px;
}
.source {
  height: 32px;
  margin-left: 24px;
  padding: 0 6px;
  border: 2px solid #c8c8c8;
  border-radius: 4px;
  font-size: 20px;
  font-weight: 700;
  line-height: 28px;
}
.ask-ai {
  display: flex;
  align-items: center;
  gap: 12px;
  margin-left: auto;
  margin-right: 42px;
  font-size: 24px;
}
.columns-btn {
  display: flex;
  align-items: center;
  gap: 12px;
  height: 52px;
  padding: 0 12px 0 16px;
  border: 2px solid #ebebeb;
  border-radius: 4px;
  font-size: 24px;
}
.filters {
  display: flex;
  align-items: center;
  gap: 24px;
  margin-top: 16px;
  font-size: 24px;
}
.search-box {
  display: flex;
  align-items: center;
  gap: 14px;
  width: 400px;
  height: 48px;
  padding: 0 14px;
  border: 2px solid #d6d6d6;
  border-radius: 4px;
}
.search-box svg {
  width: 28px;
  height: 28px;
  stroke-width: 2;
}
.search-box input {
  flex: 1;
  min-width: 0;
  padding: 0;
  border: none;
  outline: none;
  background: none;
  font: inherit;
}
.search-box input::placeholder {
  color: #707070;
}
.field {
  display: flex;
  align-items: center;
  gap: 8px;
}
.select {
  display: grid;
  align-items: center;
  width: 500px;
}
.select select, .select svg {
  grid-area: 1 / 1;
}
.select select {
  appearance: none;
  height: 54px;
  padding: 0 16px;
  border: 2px solid #ebebeb;
  border-radius: 4px;
  background: none;
  color: inherit;
  font: inherit;
}
.select svg {
  justify-self: end;
  margin-right: 18px;
}
.queries {
  width: 100%;
  margin-top: 20px;
  border-collapse: separate;
  border-spacing: 0;
  table-layout: fixed;
}
.queries th {
  height: 70px;
  padding: 4px 0 0 16px;
  border-bottom: 2px solid #c8c8c8;
  font-weight: 400;
  text-align: left;
}
.queries th span {
  display: flex;
  align-items: center;
  gap: 4px;
}
.sort {
  width: 24px;
  height: 32px;
  margin-left: 4px;
  stroke-width: 2;
}
.queries td {
  height: 70px;
  padding: 0 0 0 19px;
  border-bottom: 2px solid #c8c8c8;
}
.queries td:first-child {
  padding-left: 18px;
  border-left: 4px solid transparent;
  font-family: "DejaVu Sans Mono", monospace;
  font-size: 24px;
}
.queries td:nth-child(2) {
  padding-left: 22px;
}
.qid {
  display: block;
  width: fit-content;
  height: 32px;
  padding: 0 6px;
  border: 2px solid #0f6cbd;
  border-radius: 16px;
  color: #0f6cbd;
  font-family: "DejaVu Sans Mono", monospace;
  font-size: 20px;
  font-weight: 700;
  line-height: 28px;
}

.scrollbar {
  display: flex;
  flex-direction: column;
  gap: 15px;
  width: 30px;
  padding: 12px 6px;
}
.scrollbar svg {
  width: 18px;
  height: 9px;
  fill: #dedede;
  stroke: none;
}
.track {
  flex: 1;
}
.thumb {
  height: calc(75% + 4px);
  border-radius: 9px;
  background: #dedede;
}

/* status bar */
.statusbar {
  display: flex;
  align-items: center;
  height: 44px;
  padding: 0 30px 2px 0;
  border-top: 2px solid #e2e2e2;
  color: #8a8a8a;
  font-size: 24px;
}
.statusbar svg {
  width: 28px;
  height: 28px;
  stroke-width: 2;
  stroke-linejoin: round;
}
.workspace {
  margin-left: -12px;
}
.problems {
  display: flex;
  align-items: center;
  gap: 8px;
  margin-left: 32px;
}
.cursor-tab {
  margin-left: auto;
  margin-right: 32px;
  color: #bdbdbd;
  text-decoration: line-through;
}
.statusbar .icon-btn {
  margin-left: 32px;
}
```
